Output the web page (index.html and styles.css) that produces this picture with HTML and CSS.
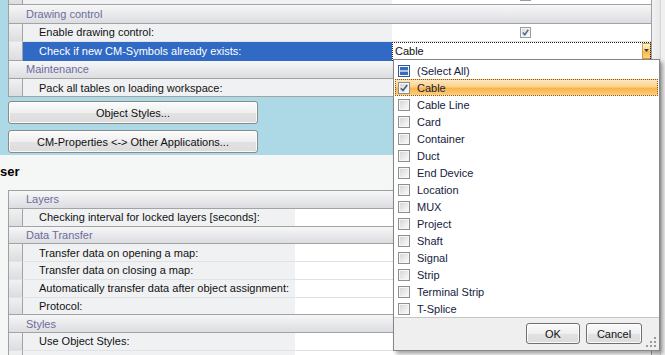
FILE: index.html
```html
<!DOCTYPE html>
<html lang="en">
<head>
    <meta charset="UTF-8">
    <title>Options</title>
    <link rel="stylesheet" href="styles.css">
</head>
<body>
<div class="window">
    <div class="main">
        <div class="pane-top">
            <div class="grid grid-top">
                <div class="row item">
                    <span class="gutter"></span><span class="label"></span>
                    <span class="value center"><span class="tick"><svg width="7" height="7" viewBox="0 0 7 7"><path d="M0.8 3.6 L2.8 5.8 L6.3 0.8" fill="none" stroke="#56698c" stroke-width="1.5"/></svg></span></span>
                </div>
                <div class="row cat">Drawing control</div>
                <div class="row item">
                    <span class="gutter"></span><span class="label">Enable drawing control:</span>
                    <span class="value center"><span class="tick"><svg width="7" height="7" viewBox="0 0 7 7"><path d="M0.8 3.6 L2.8 5.8 L6.3 0.8" fill="none" stroke="#56698c" stroke-width="1.5"/></svg></span></span>
                </div>
                <div class="row item selected">
                    <span class="gutter"></span><span class="label">Check if new CM-Symbols already exists:</span>
                    <span class="value edit">Cable<span class="drop-btn"><svg width="5" height="3" viewBox="0 0 5 3"><path d="M0 0 H5 L2.5 3 Z" fill="#3a3a3a"/></svg></span></span>
                </div>
                <div class="row cat">Maintenance</div>
                <div class="row item">
                    <span class="gutter"></span><span class="label">Pack all tables on loading workspace:</span><span class="value"></span>
                </div>
            </div>
            <div class="actions">
                <button class="btn wide">Object Styles...</button>
                <button class="btn wide">CM-Properties &lt;-&gt; Other Applications...</button>
            </div>
        </div>

        <div class="pane-bottom">
            <h2 class="section-title">ser</h2>
            <div class="grid grid-bottom">
                <div class="row cat">Layers</div>
                <div class="row item">
                    <span class="gutter"></span><span class="label">Checking interval for locked layers [seconds]:</span><span class="value"></span>
                </div>
                <div class="row cat">Data Transfer</div>
                <div class="row item">
                    <span class="gutter"></span><span class="label">Transfer data on opening a map:</span><span class="value"></span>
                </div>
                <div class="row item">
                    <span class="gutter"></span><span class="label">Transfer data on closing a map:</span><span class="value"></span>
                </div>
                <div class="row item">
                    <span class="gutter"></span><span class="label">Automatically transfer data after object assignment:</span><span class="value"></span>
                </div>
                <div class="row item">
                    <span class="gutter"></span><span class="label">Protocol:</span><span class="value"></span>
                </div>
                <div class="row cat">Styles</div>
                <div class="row item">
                    <span class="gutter"></span><span class="label">Use Object Styles:</span><span class="value"></span>
                </div>
                <div class="row item">
                    <span class="gutter"></span><span class="label"></span><span class="value"></span>
                </div>
            </div>
        </div>
    </div>
    <div class="vscroll"></div>

    <div class="dropdown">
        <ul class="check-list">
            <li><span class="cb mixed"><svg width="8" height="8" viewBox="0 0 8 8"><rect width="8" height="8" fill="#3a6bb5"/><rect y="3" width="8" height="2" fill="#a9c6ea"/></svg></span>(Select All)</li>
            <li class="active"><span class="cb"><svg width="8" height="8" viewBox="0 0 8 8"><path d="M0.8 4.2 L3 6.6 L7.2 1" fill="none" stroke="#4a5b7e" stroke-width="1.6"/></svg></span>Cable</li>
            <li><span class="cb"></span>Cable Line</li>
            <li><span class="cb"></span>Card</li>
            <li><span class="cb"></span>Container</li>
            <li><span class="cb"></span>Duct</li>
            <li><span class="cb"></span>End Device</li>
            <li><span class="cb"></span>Location</li>
            <li><span class="cb"></span>MUX</li>
            <li><span class="cb"></span>Project</li>
            <li><span class="cb"></span>Shaft</li>
            <li><span class="cb"></span>Signal</li>
            <li><span class="cb"></span>Strip</li>
            <li><span class="cb"></span>Terminal Strip</li>
            <li><span class="cb"></span>T-Splice</li>
        </ul>
        <div class="dropdown-foot">
            <button class="btn small ok">OK</button>
            <button class="btn small cancel">Cancel</button>
            <span class="grip"><svg width="11" height="11" viewBox="0 0 11 11" fill="#9a9a9a"><rect x="8" y="0" width="2" height="2"/><rect x="8" y="4" width="2" height="2"/><rect x="4" y="4" width="2" height="2"/><rect x="8" y="8" width="2" height="2"/><rect x="4" y="8" width="2" height="2"/><rect x="0" y="8" width="2" height="2"/></svg></span>
        </div>
    </div>
</div>
</body>
</html>
```

FILE: styles.css
```css
* {
    box-sizing: border-box;
}
body {
    margin: 0;
    font-family: "Liberation Sans", Arial, sans-serif;
    font-size: 11px;
    color: #111;
}
.window {
    position: relative;
    display: flex;
    width: 665px;
    height: 355px;
    overflow: hidden;
    background: #f5f7f7;
}
.main {
    flex: none;
    width: 652px;
}
.vscroll {
    flex: 1;
    background: linear-gradient(to right, #f2f2f2, #e8e8e8 60%, #d4d4d4 60%, #d4d4d4 68%, #f0f0f0 68%);
}

/* top pane */
.pane-top {
    height: 155px;
    padding-left: 8px;
    background: #add8e6;
    overflow: hidden;
}
.actions {
    display: flex;
    flex-direction: column;
    align-items: flex-start;
    gap: 6px;
    padding-top: 4px;
}

/* property grids */
.grid {
    border-left: 1px solid #a0a0a0;
    border-right: 1px solid #a0a0a0;
    background: #fff;
}
.grid-top {
    --row: 18.4px;
    --label: 369px;
    margin-top: -13px;
}
.grid-bottom {
    --row: 17.75px;
    --label: 272px;
    margin: 10px 0 0 8px;
    border-top: 1px solid #a0a0a0;
}
.row {
    height: var(--row);
}
.cat {
    display: flex;
    align-items: center;
    padding-left: 17px;
    color: #6c6c9c;
    background: linear-gradient(#f7f7f8, #dcdde1);
    border-bottom: 1px solid #a3a3a3;
}
.item {
    display: grid;
    grid-template-columns: 14px var(--label) 1fr;
}
.item > span {
    display: flex;
    align-items: center;
    border-bottom: 1px solid #e1e2e4;
}
.item:has(+ .cat) > span,
.item:last-child > span {
    border-bottom-color: #a3a3a3;
}
.gutter {
    background: linear-gradient(#f1f1f2, #dcdde1);
    border-right: 1px solid #a3a3a3;
}
.label {
    padding-left: 16px;
    background: #f0f1f3;
    white-space: nowrap;
}
.value {
    padding-left: 3px;
    background: #fff;
}
.value.center {
    justify-content: center;
    padding-left: 8px;
}
.item.selected > .label {
    background: #316ac5;
    color: #fff;
    border-bottom-color: #316ac5;
}
.edit {
    outline: 1px dotted #222;
    outline-offset: -1px;
    padding-top: 1px;
}
.drop-btn {
    display: flex;
    justify-content: center;
    align-items: flex-start;
    width: 9px;
    height: 16px;
    margin-left: auto;
    padding-top: 5px;
    border: 1px solid #d1a04a;
    background: linear-gradient(#fff2c6, #fdd487 50%, #f9b84a 52%, #fbd17a);
}
.tick {
    display: flex;
    align-items: center;
    justify-content: center;
    width: 11px;
    height: 11px;
    border: 1px solid #9c9c9c;
    background: linear-gradient(135deg, #d8d8d8, #f7f7f7 80%);
    box-shadow: inset 0 0 0 1px #f4f4f4;
}

/* buttons */
.btn {
    font: inherit;
    color: #111;
    border: 1px solid #8a8a8a;
    border-radius: 3px;
    background: linear-gradient(#fbfbfb, #efefef 50%, #e2e2e2 52%, #dcdcdc);
    box-shadow: inset 0 0 0 1px rgba(255, 255, 255, 0.8);
    padding: 0;
}
.btn.wide {
    width: 250px;
    height: 23px;
}
.btn.small {
    height: 21px;
    border-color: #707070;
}
.btn.ok {
    width: 54px;
}
.btn.cancel {
    width: 56px;
}

/* bottom pane */
.pane-bottom {
    padding-top: 9px;
}
.section-title {
    margin: 0;
    font-size: 13px;
    line-height: 16px;
    font-weight: bold;
    color: #000;
}

/* filter dropdown */
.dropdown {
    position: absolute;
    left: 393px;
    top: 59px;
    width: 267px;
    height: 292px;
    display: flex;
    flex-direction: column;
    background: #fff;
    border: 1px solid #868686;
    box-shadow: 3px 3px 4px rgba(0, 0, 0, 0.35);
    color: #15223d;
}
.check-list {
    flex: 1;
    list-style: none;
    margin: 0;
    padding: 2px 0 0;
    overflow: hidden;
}
.check-list li {
    display: flex;
    align-items: center;
    gap: 7px;
    height: 17px;
    margin: 0 1px;
    padding-left: 2px;
    border: 1px solid transparent;
    white-space: nowrap;
}
.check-list li.active {
    border: 1px dotted #8a5a1c;
    background: linear-gradient(#fde8bd, #fcd189 45%, #f9b44a 55%, #fbcd7c);
}
.cb {
    flex: none;
    display: flex;
    align-items: center;
    justify-content: center;
    width: 12px;
    height: 12px;
    border: 1px solid #8e8f8f;
    background: linear-gradient(135deg, #d3d3d3, #f5f5f5 80%);
    box-shadow: inset 0 0 0 1px #f6f6f6;
}
.cb.mixed {
    border-color: #2c5a9e;
    background: #fff;
}
.dropdown-foot {
    position: relative;
    display: flex;
    justify-content: flex-end;
    align-items: flex-start;
    gap: 6px;
    height: 33px;
    padding: 5px 17px 0 0;
    border-top: 1px solid #c6c6c6;
    background: #efefef;
}
.grip {
    position: absolute;
    right: 2px;
    bottom: 2px;
    display: flex;
}
```
